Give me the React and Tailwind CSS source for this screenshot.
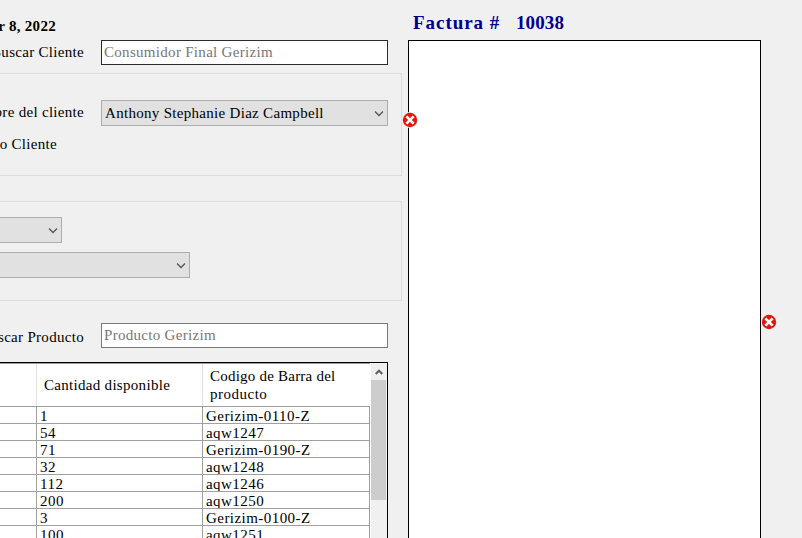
const rows = [
  ["1", "Gerizim-0110-Z"],
  ["54", "aqw1247"],
  ["71", "Gerizim-0190-Z"],
  ["32", "aqw1248"],
  ["112", "aqw1246"],
  ["200", "aqw1250"],
  ["3", "Gerizim-0100-Z"],
  ["100", "aqw1251"],
];

function Chevron() {
  return (
    <svg className="h-[7px] w-[10px] shrink-0" viewBox="0 0 10 7" fill="none" stroke="#555" strokeWidth="1.3">
      <path d="M1 1.5 L5 5.5 L9 1.5" />
    </svg>
  );
}

function ErrorIcon({ className }) {
  return (
    <svg className={`absolute h-4 w-4 ${className}`} viewBox="0 0 16 16">
      <circle cx="8" cy="8" r="8" fill="#f5f1f1" />
      <circle cx="8" cy="8" r="7.2" fill="#e2180a" />
      <path d="M4.4 4.4 L11.6 11.6 M11.6 4.4 L4.4 11.6" stroke="#fff" strokeWidth="2.7" />
    </svg>
  );
}

function Label({ className, children }) {
  return (
    <div className={`flex h-[18px] shrink-0 justify-end whitespace-nowrap ${className}`}>
      <span className="shrink-0">{children}</span>
    </div>
  );
}

function Select({ className, children }) {
  return (
    <div className={`flex h-[26px] shrink-0 items-center justify-between border border-[#adadad] bg-[#e1e1e1] pr-[3px] pl-[3px] ${className}`}>
      <span className="whitespace-nowrap">{children}</span>
      <Chevron />
    </div>
  );
}

function SearchBox({ className, children }) {
  return (
    <div className={`h-[25px] w-[287px] shrink-0 border bg-white pl-[2px] leading-[22px] text-[#777] ${className}`}>
      {children}
    </div>
  );
}

function ProductTable() {
  return (
    <div className="mt-[14px] flex h-[176px] w-[388px] overflow-hidden border-t border-r border-black bg-white">
      <div className="w-[370px] shrink-0 border-t border-[#a0a0a0]">
        <div className="flex h-[43px] border-b border-[#a0a0a0]">
          <div className="w-[37px] border-r border-[#e2e2e2]" />
          <div className="flex w-[166px] items-center border-r border-[#e2e2e2] pl-[7px]">Cantidad disponible</div>
          <div className="flex w-[167px] items-center pl-[7px] leading-[18px] tracking-[0.22px]">
            <span>
              Codigo de Barra del
              <br />
              <span className="tracking-[0.5px]">producto</span>
            </span>
          </div>
        </div>
        {rows.map(([amount, code]) => (
          <div key={code} className="flex h-[17px] border-b border-[#a0a0a0] leading-[19px]">
            <div className="w-[37px] border-r border-[#a0a0a0]" />
            <div className="w-[166px] overflow-hidden border-r border-[#a0a0a0] pl-[3px] tracking-[0.5px]">{amount}</div>
            <div className="w-[167px] overflow-hidden border-r border-[#a0a0a0] pl-[3px] tracking-[0.45px]">{code}</div>
          </div>
        ))}
      </div>
      <div className="ml-px flex w-4 flex-col bg-[#f0f0f0]">
        <div className="flex h-[17px] items-center justify-center pr-px">
          <svg className="h-[6px] w-2" viewBox="0 0 8 6" fill="none" stroke="#606060" strokeWidth="2">
            <path d="M0.7 5 L4 1.7 L7.3 5" />
          </svg>
        </div>
        <div className="h-[120px] w-[15px] bg-[#cdcdcd]" />
      </div>
    </div>
  );
}

export default function App() {
  return (
    <div className="relative flex h-[538px] w-[802px] overflow-hidden bg-[#f0f0f0] font-['Liberation_Serif',serif] text-[15px] leading-[18px] tracking-[0.3px] text-black">
      <div className="flex w-[402px] shrink-0 flex-col">
        <Label className="mt-[17px] w-[56px] font-bold">October 8, 2022</Label>
        <div className="mt-[5px] flex gap-[17px]">
          <Label className="mt-[3px] w-[84px]">Buscar Cliente</Label>
          <SearchBox className="border-[#2b2b2b]">Consumidor Final Gerizim</SearchBox>
        </div>
        <div className="mt-2 h-[103px] border-y border-r border-[#dcdcdc] pt-[26px]">
          <div className="flex gap-[17px]">
            <Label className="mt-[3px] w-[84px]">Nombre del cliente</Label>
            <Select className="w-[287px]">Anthony Stephanie Diaz Campbell</Select>
          </div>
          <Label className="mt-[9px] w-[57px]">Codigo Cliente</Label>
        </div>
        <div className="mt-[25px] flex h-[100px] flex-col gap-[9px] border-y border-r border-[#dcdcdc] pt-[15px]">
          <Select className="-ml-px w-[63px]" />
          <Select className="-ml-px w-[191px]" />
        </div>
        <div className="mt-[22px] flex gap-[17px]">
          <Label className="mt-[5px] w-[84px]">Buscar Producto</Label>
          <SearchBox className="border-[#7a7a7a]">Producto Gerizim</SearchBox>
        </div>
        <ProductTable />
      </div>
      <div className="ml-[6px] flex w-[353px] flex-col">
        <div className="flex h-10 items-start pt-[10px] pl-[5px] text-[19px] leading-[25px] font-bold text-[#00008b]">
          <span className="w-[103px] tracking-[0.95px]">Factura #</span>
          <span className="tracking-[0.1px]">10038</span>
        </div>
        <div className="h-[498px] border-x border-t border-black bg-white" />
      </div>
      <ErrorIcon className="top-[112px] left-[402px]" />
      <ErrorIcon className="top-[314px] left-[761px]" />
    </div>
  );
}
